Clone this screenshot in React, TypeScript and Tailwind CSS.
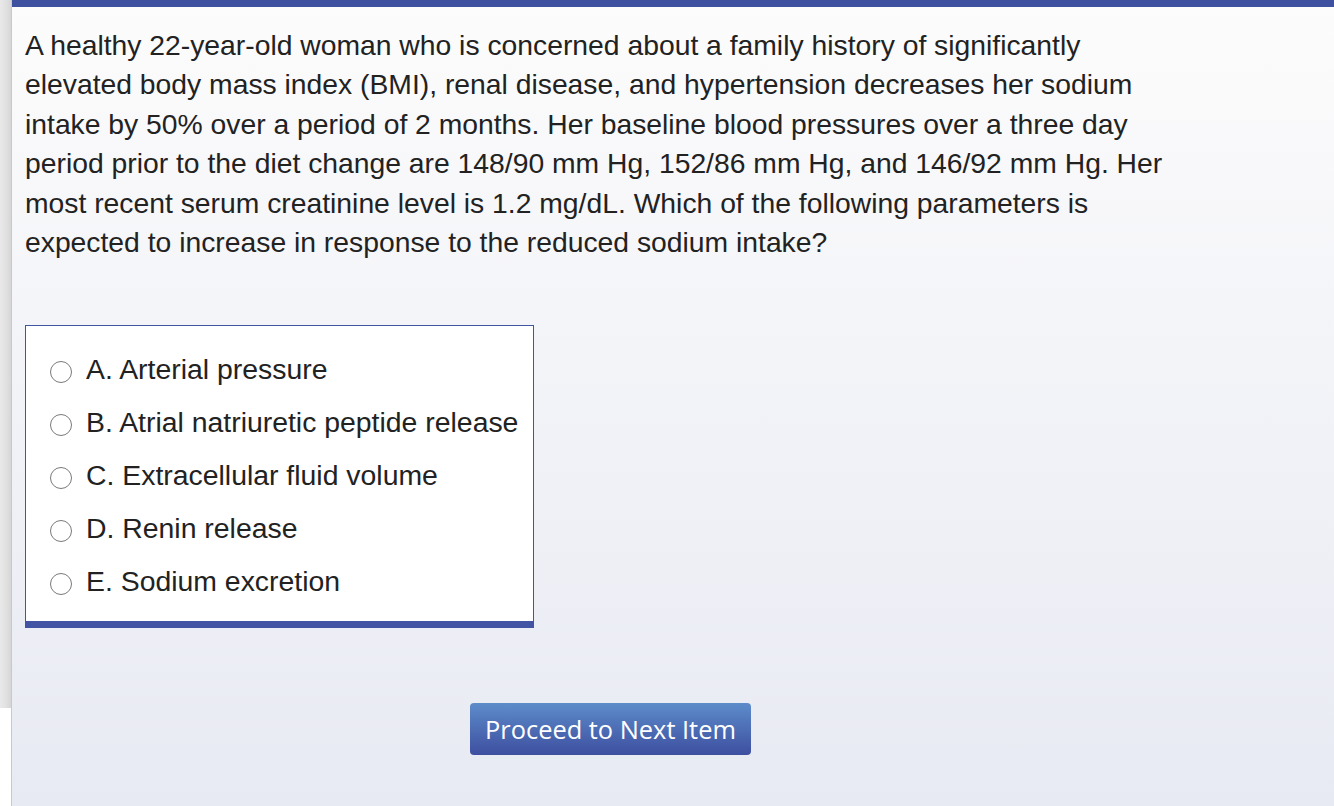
import React from 'react';

// Pantalla de pregunta con opciones
const options = [
  'A. Arterial pressure',
  'B. Atrial natriuretic peptide release',
  'C. Extracellular fluid volume',
  'D. Renin release',
  'E. Sodium excretion',
];

const App: React.FC = () => {
  return (
    <div className="flex h-[806px] w-full overflow-hidden font-['Liberation_Sans',Arial,sans-serif]">
      {/* Barra lateral */}
      <div className="flex w-[12px] flex-col border-r border-[#c9c9c9] bg-white">
        <div className="h-[708px] bg-gradient-to-r from-[#e9e9e9] via-[#e2e2e2] to-[#d6d6d6]" />
        <div className="flex-1 bg-white" />
      </div>

      {/* Contenido */}
      <div className="flex flex-1 flex-col bg-gradient-to-b from-[#fcfcfc] to-[#e8eaf3]">
        <div className="h-[7px] bg-[#3e51a1]" />
        <div className="w-[1184px] pl-[13px] pt-[19px]">
          <p className="max-w-[1150px] text-[28.3px] leading-[39.4px] text-[#222]">
            A healthy 22-year-old woman who is concerned about a family history of significantly elevated body mass index (BMI), renal disease, and hypertension decreases her sodium intake by 50% over a period of 2 months. Her baseline blood pressures over a three day period prior to the diet change are 148/90 mm Hg, 152/86 mm Hg, and 146/92 mm Hg. Her most recent serum creatinine level is 1.2 mg/dL. Which of the following parameters is expected to increase in response to the reduced sodium intake?
          </p>

          <div className="mt-[63px] w-[509px] border border-b-[7px] border-[#4155a4] bg-white pb-[14px] pt-[16px]">
            {options.map((opt) => (
              <label key={opt} className="flex h-[53px] items-center pl-[24px]">
                <span className="mt-[6px] h-[22px] w-[22px] shrink-0 rounded-full border-[1.5px] border-[#7a7a7a] bg-white" />
                <span className="ml-[14px] whitespace-nowrap text-[28.4px] text-[#222]">{opt}</span>
              </label>
            ))}
          </div>

          <div className="mt-[75px] flex justify-center">
            <button className="h-[52px] rounded-[4px] bg-gradient-to-b from-[#5d8cca] to-[#3e4fa0] px-[15px] font-['Open_Sans',sans-serif] text-[25.4px] text-white">
              Proceed to Next Item
            </button>
          </div>
        </div>
      </div>
    </div>
  );
};

export default App;
